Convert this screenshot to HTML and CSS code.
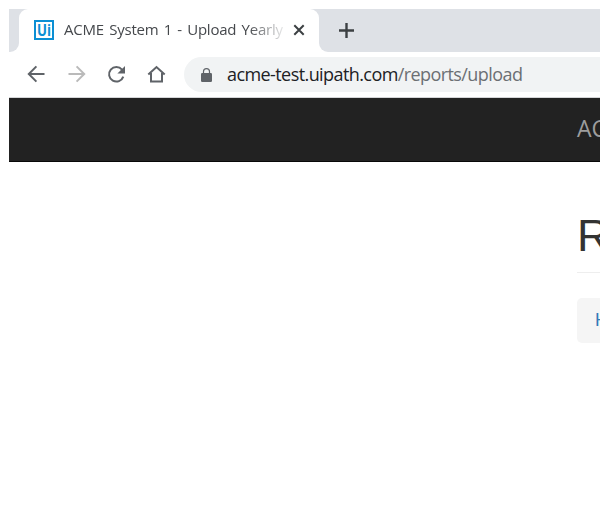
FILE: index.html
```html
<!DOCTYPE html>
<html lang="en">
<head>
<meta charset="utf-8">
<title>Upload</title>
<link rel="stylesheet" href="styles.css">
</head>
<body>
<div class="window">
  <div class="tabs">
    <div class="left-edge"></div>
    <div class="tab">
      <svg class="favicon" width="20" height="20" viewBox="0 0 20 20"><rect x="1" y="1" width="18" height="18" fill="#fff" stroke="#0b8fd4" stroke-width="2"/><text x="3" y="15.6" textLength="14" lengthAdjust="spacingAndGlyphs">Ui</text></svg>
      <span class="title">ACME System 1 - Upload Yearly</span>
      <svg class="close" width="12" height="12" viewBox="0 0 12 12"><path d="M1.3 1.3l9.4 9.4M10.7 1.3l-9.4 9.4" stroke="#3c4043" stroke-width="2"/></svg>
    </div>
    <div class="strip">
      <svg width="16" height="16" viewBox="0 0 16 16"><path d="M7.5 0v15M0 7.5h15" stroke="#3c4043" stroke-width="2.4"/></svg>
    </div>
  </div>
  <div class="toolbar">
    <svg class="icon" width="20" height="20" viewBox="0 0 20 20"><path d="M18.5 10H3M10.4 2.4L2.8 10l7.6 7.6" stroke="#5f6368"/></svg>
    <svg class="icon" width="20" height="20" viewBox="0 0 20 20"><path d="M2.5 10H18M10.6 2.4l7.6 7.6-7.6 7.6" stroke="#bababa"/></svg>
    <svg class="icon" width="20" height="20" viewBox="0 0 20 20"><path d="M16 5.6A7.3 7.3 0 1 0 17.3 12.6" stroke="#5f6368"/><path d="M19 2v7.6h-7.6z" fill="#5f6368" stroke="none"/></svg>
    <svg class="icon" width="20" height="20" viewBox="0 0 20 20"><path d="M2.3 10.6L10.5 3l8.2 7.6M5 9v8.6h11V9" stroke="#5f6368"/></svg>
    <div class="address">
      <svg width="11" height="14" viewBox="0 0 11 14"><rect y="5" width="11" height="9" rx="1.2" fill="#5f6368"/><path d="M2.5 5.5V3.6a3 3 0 0 1 6 0v1.9" fill="none" stroke="#5f6368" stroke-width="1.2"/></svg>
      <span class="url">acme-test.uipath.com<span class="path">/reports/upload</span></span>
    </div>
  </div>
  <nav class="navbar"><span class="brand">AC</span></nav>
  <main class="content">
    <h1>R</h1>
    <div class="crumb">H</div>
  </main>
</div>
</body>
</html>
```
FILE: styles.css
```css
* { box-sizing: border-box; }
body { margin: 0; background: #fff; overflow: hidden; height: 522px; }
.window { padding: 9px 0 0 9px; overflow: hidden; }
.tabs { display: flex; height: 43px; background: linear-gradient(#dee1e6 0 20px, #fff 20px); }
.left-edge { width: 10px; background: #dee1e6; border-bottom-right-radius: 9px; }
.tab { width: 300px; background: #fff; border-radius: 9px 9px 0 0; display: flex; align-items: center; padding: 0 0 1px 15px; }
.favicon text { font: bold 15.5px "Open Sans", sans-serif; fill: #0b8fd4; }
.title { width: 220px; margin: -2px 0 0 10px; font: 15px "Open Sans", sans-serif; line-height: 22px; letter-spacing: -0.22px; word-spacing: 1.6px; color: #45484c; white-space: nowrap; overflow: hidden; -webkit-mask-image: linear-gradient(to right, #000 184px, transparent 224px); mask-image: linear-gradient(to right, #000 184px, transparent 224px); }
.close { margin-left: 9px; }
.strip { flex: 1; background: #dee1e6; border-bottom-left-radius: 9px; display: flex; align-items: center; padding-left: 20px; }
.toolbar { height: 46px; display: flex; align-items: center; gap: 20px; padding-left: 17px; border-bottom: 1px solid #d5d6d8; }
.icon { fill: none; stroke-width: 2; flex: none; margin-top: -2px; }
.address { flex: 1; height: 35px; margin-left: -2px; background: #f1f3f4; border-radius: 18px 0 0 18px; display: flex; align-items: center; padding-left: 17px; }
.url { margin: -1px 0 0 15px; font: 18px "Open Sans", sans-serif; line-height: 26px; letter-spacing: -0.58px; color: #202124; white-space: nowrap; }
.path { color: #6b6f73; }
.navbar { height: 64px; background: #222; border-bottom: 1px solid #080808; padding-left: 568px; overflow: hidden; }
.brand { display: block; font: 23px "Open Sans", sans-serif; line-height: 61px; color: #9d9d9d; white-space: nowrap; }
.content { padding-left: 568px; overflow: hidden; }
h1 { margin: 0; height: 111px; padding: 44px 0 0; border-bottom: 1px solid #eee; font: 45px "Liberation Sans", Arial, sans-serif; line-height: 60px; color: #333; }
.crumb { margin-top: 25px; height: 45px; background: #f5f5f5; border-radius: 5px 0 0 5px; padding-left: 18px; font: 18px "Liberation Sans", Arial, sans-serif; line-height: 45px; color: #337ab7; overflow: hidden; }
```
